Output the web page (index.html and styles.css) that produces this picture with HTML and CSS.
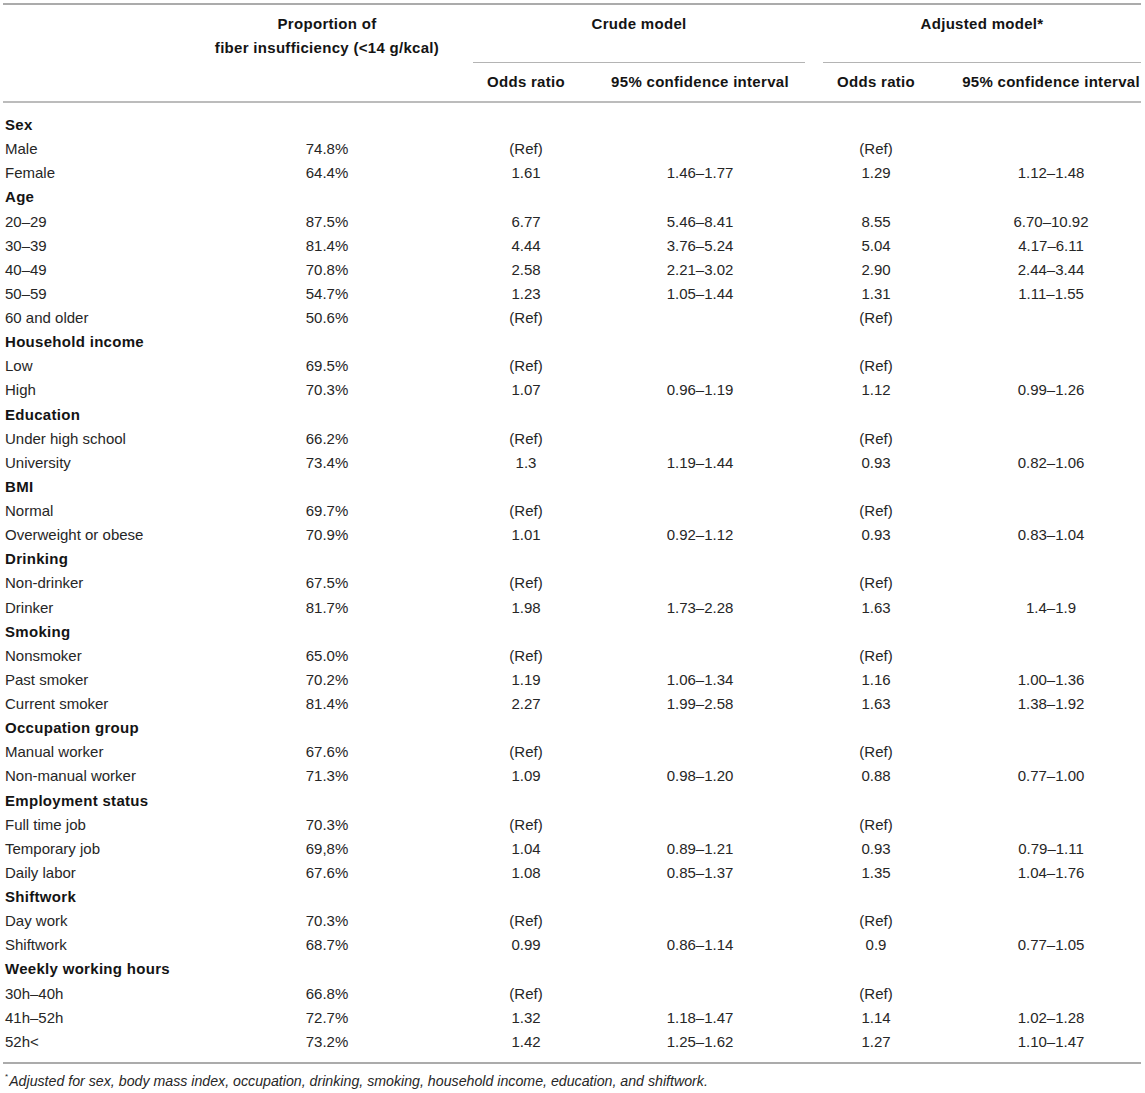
FILE: index.html
```html
<!DOCTYPE html>
<html lang="en">
<head>
<meta charset="utf-8">
<title>Fiber insufficiency table</title>
<link rel="stylesheet" href="styles.css">
</head>
<body>
<div class="wrap">
<table class="tbl">
  <colgroup>
    <col class="c1"><col class="c2"><col class="c3"><col class="c4"><col class="c5"><col class="c6">
  </colgroup>
  <thead>
    <tr>
      <th class="hcell blank" rowspan="2"></th>
      <th class="hcell prop" rowspan="2">Proportion of<br>fiber insufficiency (&lt;14 g/kcal)</th>
      <th class="group crude" colspan="2"><div class="group-in">Crude model</div></th>
      <th class="group adj" colspan="2"><div class="group-in">Adjusted model*</div></th>
    </tr>
    <tr>
      <th class="sub p3">Odds ratio</th>
      <th class="sub p4">95% confidence interval</th>
      <th class="sub p5">Odds ratio</th>
      <th class="sub p6">95% confidence interval</th>
    </tr>
  </thead>
  <tbody>
    <tr class="cat first"><td colspan="6">Sex</td></tr>
    <tr><td>Male</td><td>74.8%</td><td>(Ref)</td><td></td><td>(Ref)</td><td></td></tr>
    <tr><td>Female</td><td>64.4%</td><td>1.61</td><td>1.46–1.77</td><td>1.29</td><td>1.12–1.48</td></tr>
    <tr class="cat"><td colspan="6">Age</td></tr>
    <tr><td>20–29</td><td>87.5%</td><td>6.77</td><td>5.46–8.41</td><td>8.55</td><td>6.70–10.92</td></tr>
    <tr><td>30–39</td><td>81.4%</td><td>4.44</td><td>3.76–5.24</td><td>5.04</td><td>4.17–6.11</td></tr>
    <tr><td>40–49</td><td>70.8%</td><td>2.58</td><td>2.21–3.02</td><td>2.90</td><td>2.44–3.44</td></tr>
    <tr><td>50–59</td><td>54.7%</td><td>1.23</td><td>1.05–1.44</td><td>1.31</td><td>1.11–1.55</td></tr>
    <tr><td>60 and older</td><td>50.6%</td><td>(Ref)</td><td></td><td>(Ref)</td><td></td></tr>
    <tr class="cat"><td colspan="6">Household income</td></tr>
    <tr><td>Low</td><td>69.5%</td><td>(Ref)</td><td></td><td>(Ref)</td><td></td></tr>
    <tr><td>High</td><td>70.3%</td><td>1.07</td><td>0.96–1.19</td><td>1.12</td><td>0.99–1.26</td></tr>
    <tr class="cat"><td colspan="6">Education</td></tr>
    <tr><td>Under high school</td><td>66.2%</td><td>(Ref)</td><td></td><td>(Ref)</td><td></td></tr>
    <tr><td>University</td><td>73.4%</td><td>1.3</td><td>1.19–1.44</td><td>0.93</td><td>0.82–1.06</td></tr>
    <tr class="cat"><td colspan="6">BMI</td></tr>
    <tr><td>Normal</td><td>69.7%</td><td>(Ref)</td><td></td><td>(Ref)</td><td></td></tr>
    <tr><td>Overweight or obese</td><td>70.9%</td><td>1.01</td><td>0.92–1.12</td><td>0.93</td><td>0.83–1.04</td></tr>
    <tr class="cat"><td colspan="6">Drinking</td></tr>
    <tr><td>Non-drinker</td><td>67.5%</td><td>(Ref)</td><td></td><td>(Ref)</td><td></td></tr>
    <tr><td>Drinker</td><td>81.7%</td><td>1.98</td><td>1.73–2.28</td><td>1.63</td><td>1.4–1.9</td></tr>
    <tr class="cat"><td colspan="6">Smoking</td></tr>
    <tr><td>Nonsmoker</td><td>65.0%</td><td>(Ref)</td><td></td><td>(Ref)</td><td></td></tr>
    <tr><td>Past smoker</td><td>70.2%</td><td>1.19</td><td>1.06–1.34</td><td>1.16</td><td>1.00–1.36</td></tr>
    <tr><td>Current smoker</td><td>81.4%</td><td>2.27</td><td>1.99–2.58</td><td>1.63</td><td>1.38–1.92</td></tr>
    <tr class="cat"><td colspan="6">Occupation group</td></tr>
    <tr><td>Manual worker</td><td>67.6%</td><td>(Ref)</td><td></td><td>(Ref)</td><td></td></tr>
    <tr><td>Non-manual worker</td><td>71.3%</td><td>1.09</td><td>0.98–1.20</td><td>0.88</td><td>0.77–1.00</td></tr>
    <tr class="cat"><td colspan="6">Employment status</td></tr>
    <tr><td>Full time job</td><td>70.3%</td><td>(Ref)</td><td></td><td>(Ref)</td><td></td></tr>
    <tr><td>Temporary job</td><td>69,8%</td><td>1.04</td><td>0.89–1.21</td><td>0.93</td><td>0.79–1.11</td></tr>
    <tr><td>Daily labor</td><td>67.6%</td><td>1.08</td><td>0.85–1.37</td><td>1.35</td><td>1.04–1.76</td></tr>
    <tr class="cat"><td colspan="6">Shiftwork</td></tr>
    <tr><td>Day work</td><td>70.3%</td><td>(Ref)</td><td></td><td>(Ref)</td><td></td></tr>
    <tr><td>Shiftwork</td><td>68.7%</td><td>0.99</td><td>0.86–1.14</td><td>0.9</td><td>0.77–1.05</td></tr>
    <tr class="cat"><td colspan="6">Weekly working hours</td></tr>
    <tr><td>30h–40h</td><td>66.8%</td><td>(Ref)</td><td></td><td>(Ref)</td><td></td></tr>
    <tr><td>41h–52h</td><td>72.7%</td><td>1.32</td><td>1.18–1.47</td><td>1.14</td><td>1.02–1.28</td></tr>
    <tr class="last"><td>52h&lt;</td><td>73.2%</td><td>1.42</td><td>1.25–1.62</td><td>1.27</td><td>1.10–1.47</td></tr>
  </tbody>
</table>
<p class="note"><sup class="ast">*</sup>Adjusted for sex, body mass index, occupation, drinking, smoking, household income, education, and shiftwork.</p>
</div>
</body>
</html>
```
FILE: styles.css
```css
html, body {
  margin: 0;
  padding: 0;
  background: #ffffff;
}

.wrap {
  padding: 3px 0 0 3px;
  font-family: "Liberation Sans", Arial, sans-serif;
  color: #262626;
}

.tbl {
  width: 1138px;
  table-layout: fixed;
  border-collapse: separate;
  border-spacing: 0;
  border-top: 2px solid #ababab;
  border-bottom: 2px solid #ababab;
  font-size: 15px;
}

.c1 { width: 209px; }
.c2 { width: 230px; }
.c3 { width: 137px; }
.c4 { width: 226px; }
.c5 { width: 124px; }
.c6 { width: 212px; }

th {
  font-weight: bold;
  color: #141414;
  letter-spacing: 0.3px;
  line-height: 24px;
  white-space: nowrap;
  padding: 0;
}

.hcell {
  vertical-align: top;
  padding-top: 7px;
  border-bottom: 2px solid #bcbcbc;
  text-align: center;
}

.group {
  vertical-align: top;
  padding-top: 7px;
  text-align: center;
}

.crude { padding-left: 31px; }
.adj { padding-left: 18px; }

.group-in {
  padding-bottom: 26px;
  border-bottom: 1px solid #b4b4b4;
}

.sub {
  text-align: center;
  padding-top: 7px;
  padding-bottom: 7px;
  border-bottom: 2px solid #bcbcbc;
}

.p3 { padding-left: 31px; }
.p4 { padding-left: 16px; }
.p5 { padding-left: 18px; }
.p6 { padding-left: 32px; }

td {
  padding: 0;
  line-height: 24.13px;
  white-space: nowrap;
  text-align: center;
}

td:nth-child(1) {
  text-align: left;
  padding-left: 2px;
}

td:nth-child(3) { padding-left: 31px; }
td:nth-child(4) { padding-left: 16px; }
td:nth-child(5) { padding-left: 18px; }
td:nth-child(6) { padding-left: 32px; }

.cat td {
  font-weight: bold;
  color: #141414;
  letter-spacing: 0.3px;
  text-align: left;
  padding-left: 2px;
}

.first td { padding-top: 10px; }
.last td { padding-bottom: 8px; }

.note {
  margin: 9px 0 0 2px;
  font-size: 14.2px;
  line-height: 16px;
  font-style: italic;
  color: #262626;
}

.ast {
  font-size: 8px;
  vertical-align: top;
  line-height: 8px;
  font-style: normal;
  margin-right: 1px;
}
```
